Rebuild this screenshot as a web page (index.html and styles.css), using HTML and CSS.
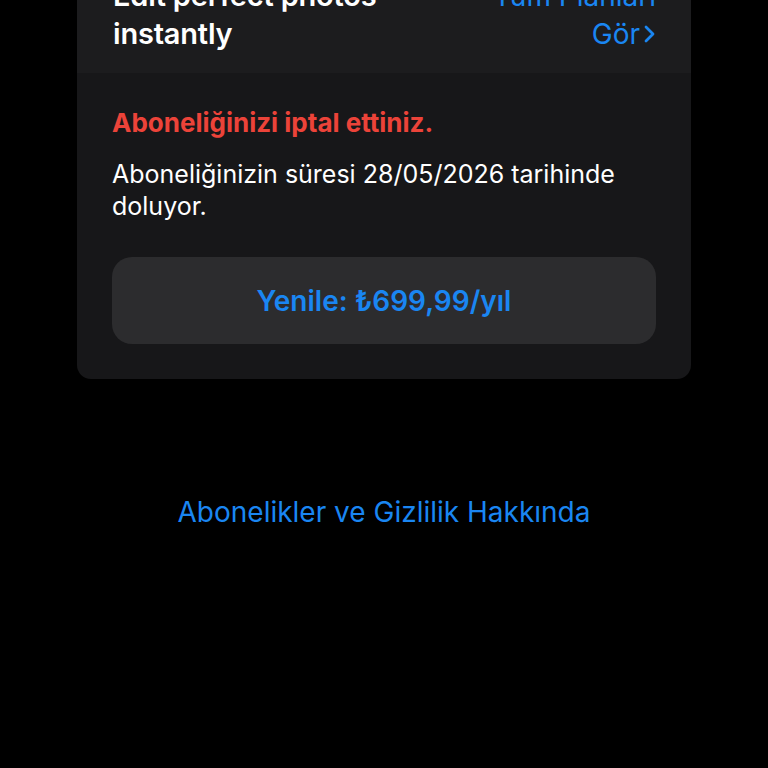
FILE: index.html
```html
<!DOCTYPE html>
<html lang="tr">
<head>
<meta charset="utf-8">
<link rel="stylesheet" href="styles.css">
</head>
<body>
<div class="card">
  <div class="card-head">
    <div class="app-title">Edit perfect photos<br>instantly</div>
    <div class="plans-link">Tüm Planları<br><span class="gor">Gör<svg class="chev" width="13" height="20" viewBox="0 0 13 20"><path d="M3 3 L10 10 L3 17" fill="none" stroke="currentColor" stroke-width="2.8" stroke-linecap="round" stroke-linejoin="round"/></svg></span></div>
  </div>
  <div class="card-body">
    <div class="cancel-title">Aboneliğinizi iptal ettiniz.</div>
    <div class="cancel-text">Aboneliğinizin süresi 28/05/2026 tarihinde doluyor.</div>
    <div class="renew-btn">Yenile: ₺699,99/yıl</div>
  </div>
</div>
<div class="about-link">Abonelikler ve Gizlilik Hakkında</div>
</body>
</html>
```
FILE: styles.css
```css
html, body {
  margin: 0;
  padding: 0;
  background: #000;
  height: 768px;
  overflow: hidden;
}
body {
  font-family: Inter, "Noto Sans", "Liberation Sans", sans-serif;
  color: #fff;
}
.card {
  width: 614px;
  margin: -40px 0 0 77px;
  background: #171719;
  border-radius: 14px;
  overflow: hidden;
}
.card-head {
  background: #1c1c1e;
  height: 113px;
  box-sizing: border-box;
  display: flex;
  justify-content: space-between;
  align-items: flex-end;
  padding: 0 35px 20px 36px;
}
.app-title {
  font-size: 29px;
  font-weight: 600;
  line-height: 38px;
  letter-spacing: -0.2px;
}
.plans-link {
  font-size: 28px;
  line-height: 38px;
  color: #1a86f2;
  text-align: right;
}
.gor {
  display: inline-flex;
  align-items: center;
  gap: 3px;
}
.chev {
  display: block;
}
.card-body {
  padding: 35px 35px 35px 35px;
}
.cancel-title {
  font-size: 26px;
  font-weight: 700;
  line-height: 30px;
  color: #ec4339;
}
.cancel-text {
  margin-top: 20px;
  font-size: 25px;
  line-height: 32px;
  color: #fff;
}
.renew-btn {
  margin-top: 35px;
  height: 87px;
  border-radius: 20px;
  background: #2c2c2e;
  color: #1a86f2;
  font-size: 28px;
  font-weight: 600;
  display: flex;
  align-items: center;
  justify-content: center;
}
.about-link {
  margin-top: 116px;
  text-align: center;
  font-size: 28px;
  line-height: 34px;
  color: #1a86f2;
}
```
